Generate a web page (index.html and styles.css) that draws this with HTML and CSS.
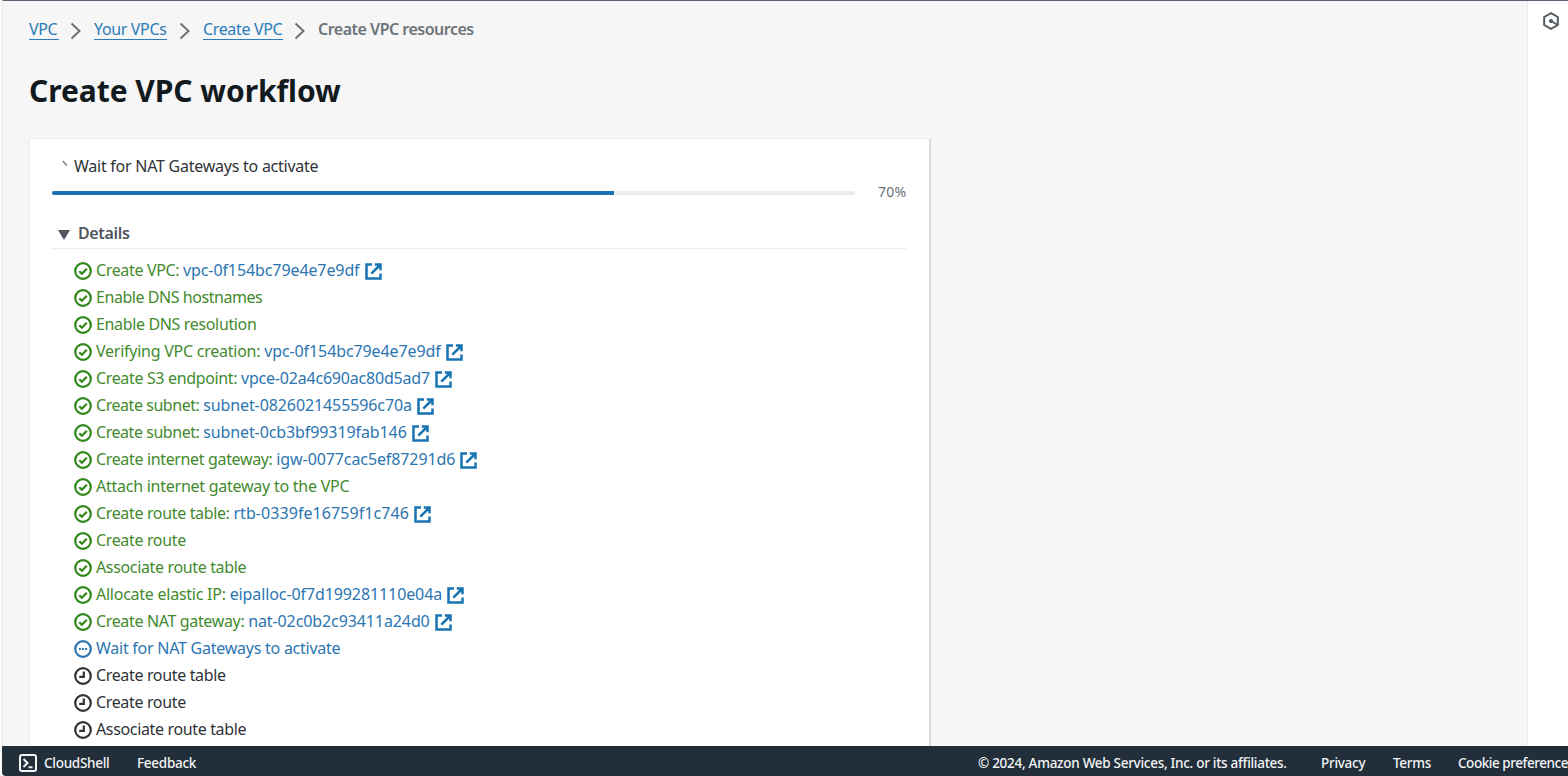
FILE: index.html
```html
<!DOCTYPE html>
<html lang="en">
<head>
<meta charset="utf-8">
<title>Create VPC workflow</title>
<link rel="stylesheet" href="styles.css">
</head>
<body>
<svg class="defs" aria-hidden="true">
  <symbol id="ok" viewBox="0 0 18 18"><circle cx="9" cy="9" r="7.8"/><path d="M5.3 9.2l2.6 2.5 4.9-5"/></symbol>
  <symbol id="run" viewBox="0 0 18 18"><circle cx="9" cy="9" r="7.8"/><path d="M4.9 9h2M8 9h2M11.1 9h2"/></symbol>
  <symbol id="wait" viewBox="0 0 18 18"><circle cx="9" cy="9" r="7.8"/><path d="M9.8 4.6v5.2H5.2"/></symbol>
  <symbol id="ext" viewBox="0 0 17 17"><path d="M7 1.6H1.5v13.9h14V10.5M9.8 1.5h5.7v5.7M15 2L6.3 10.7"/></symbol>
  <symbol id="chev" viewBox="0 0 12 18"><path d="M1.5 1.5L9.5 9l-8 7.5"/></symbol>
</svg>
<div class="app">
  <div class="body">
    <main class="main">
      <nav class="crumbs">
        <a class="c1">VPC</a><svg class="chev"><use href="#chev"/></svg>
        <a class="c2">Your VPCs</a><svg class="chev"><use href="#chev"/></svg>
        <a class="c3">Create VPC</a><svg class="chev"><use href="#chev"/></svg>
        <b>Create VPC resources</b>
      </nav>
      <h1>Create VPC workflow</h1>
      <section class="card">
        <div class="status"><svg class="spin" viewBox="0 0 6 7"><path d="M.8 1l4 4.5"/></svg><span>Wait for NAT Gateways to activate</span></div>
        <div class="progress"><div class="track"><div class="fill"></div></div><span class="pct">70%</span></div>
        <div class="details"><svg class="caret" viewBox="0 0 12 10"><path d="M0 0h12L6 10z"/></svg><span>Details</span></div>
        <ul class="steps">
          <li class="ok"><svg><use href="#ok"/></svg><span>Create VPC: <a>vpc-0f154bc79e4e7e9df</a></span><svg class="ext"><use href="#ext"/></svg></li>
          <li class="ok tight"><svg><use href="#ok"/></svg><span>Enable DNS hostnames</span></li>
          <li class="ok"><svg><use href="#ok"/></svg><span>Enable DNS resolution</span></li>
          <li class="ok loose"><svg><use href="#ok"/></svg><span>Verifying VPC creation: <a>vpc-0f154bc79e4e7e9df</a></span><svg class="ext"><use href="#ext"/></svg></li>
          <li class="ok endpoint"><svg><use href="#ok"/></svg><span>Create S3 endpoint: <a>vpce-02a4c690ac80d5ad7</a></span><svg class="ext"><use href="#ext"/></svg></li>
          <li class="ok tight"><svg><use href="#ok"/></svg><span>Create subnet: <a>subnet-0826021455596c70a</a></span><svg class="ext"><use href="#ext"/></svg></li>
          <li class="ok tight"><svg><use href="#ok"/></svg><span>Create subnet: <a>subnet-0cb3bf99319fab146</a></span><svg class="ext"><use href="#ext"/></svg></li>
          <li class="ok"><svg><use href="#ok"/></svg><span>Create internet gateway: <a>igw-0077cac5ef87291d6</a></span><svg class="ext"><use href="#ext"/></svg></li>
          <li class="ok loose"><svg><use href="#ok"/></svg><span>Attach internet gateway to the VPC</span></li>
          <li class="ok table"><svg><use href="#ok"/></svg><span>Create route table: <a>rtb-0339fe16759f1c746</a></span><svg class="ext"><use href="#ext"/></svg></li>
          <li class="ok"><svg><use href="#ok"/></svg><span>Create route</span></li>
          <li class="ok"><svg><use href="#ok"/></svg><span>Associate route table</span></li>
          <li class="ok loose"><svg><use href="#ok"/></svg><span>Allocate elastic IP: <a>eipalloc-0f7d199281110e04a</a></span><svg class="ext"><use href="#ext"/></svg></li>
          <li class="ok"><svg><use href="#ok"/></svg><span>Create NAT gateway: <a>nat-02c0b2c93411a24d0</a></span><svg class="ext"><use href="#ext"/></svg></li>
          <li class="run loose"><svg><use href="#run"/></svg><span>Wait for NAT Gateways to activate</span></li>
          <li><svg><use href="#wait"/></svg><span>Create route table</span></li>
          <li><svg><use href="#wait"/></svg><span>Create route</span></li>
          <li><svg><use href="#wait"/></svg><span>Associate route table</span></li>
        </ul>
      </section>
    </main>
    <aside class="rail"><svg viewBox="0 0 18 18"><path d="M9 1.2l6.8 3.8v8L9 16.8 2.2 13V5z"/><path d="M9 9l6 3.5"/><circle cx="9" cy="9" r="1.6"/></svg></aside>
  </div>
  <footer class="footer">
    <svg viewBox="0 0 18 18"><rect x="1" y="1" width="16" height="16" rx="2"/><path d="M4.5 5l4 4-4 4M9.5 13.2h4"/></svg>
    <span class="shell">CloudShell</span><span class="feedback">Feedback</span>
    <span class="copy">© 2024, Amazon Web Services, Inc. or its affiliates.</span>
    <span class="privacy">Privacy</span><span class="terms">Terms</span><span class="cookies">Cookie preference</span>
  </footer>
</div>
</body>
</html>
```
FILE: styles.css
```css
* { box-sizing: border-box; }
body { margin: 0; background: #fff; overflow: hidden; font: 16px/27px "Noto Sans", "Open Sans", sans-serif; letter-spacing: -0.35px; color: #2f3338; }
svg { fill: none; stroke: currentColor; flex: none; }
.defs { display: none; }
.app { height: 776px; padding-left: 2px; display: flex; flex-direction: column; overflow: hidden; background: #fafafa; }
.body { height: 746px; display: flex; border-top: 1px solid #5b6275; border-left: 1px solid #e4e5e6; background: #f6f6f6; overflow: hidden; }
.main { flex: 1; padding: 15px 0 0 26px; }
.crumbs { display: flex; height: 27px; align-items: flex-start; white-space: nowrap; color: #6d7478; }
.crumbs a { color: #2b7cb8; height: 24px; border-bottom: 1px solid #2b7cb8; }
.c1 { width: 30px; }
.c2 { width: 73px; }
.c3 { width: 80px; }
.crumbs b { font-weight: 600; letter-spacing: -0.5px; }
.chev { width: 12px; height: 18px; margin: 6px 12px 0 11px; stroke-width: 2; color: #6d7478; }
.crumbs .c2 + .chev { margin-left: 12px; }
h1 { margin: 26px 0 0; font-size: 30px; line-height: 44px; font-weight: 700; letter-spacing: -0.05px; color: #121a1e; white-space: nowrap; }
.card { width: 902px; height: 640px; margin-top: 25px; padding: 14px 22px 0; background: #fff; border: 1px solid #eeeff0; border-right: 2px solid #dcdddd; }
.status { display: flex; padding-left: 10px; gap: 6px; height: 27px; letter-spacing: -0.25px; }
.spin { width: 6px; height: 7px; margin-top: 7px; color: #7b8085; stroke-width: 1.5; }
.progress { display: flex; height: 22px; align-items: center; }
.track { width: 803px; height: 4px; margin-top: 4px; background: #ececec; border-radius: 2px; }
.fill { width: 70%; height: 4px; background: #1873b1; border-radius: 2px 0 0 2px; }
.pct { margin-left: 23px; font-size: 14px; letter-spacing: 0.2px; color: #687078; }
.details { display: flex; align-items: center; width: 855px; height: 47px; padding: 16px 0 0 6px; gap: 8px; font-weight: 600; color: #50575e; border-bottom: 1px solid #eeeeef; }
.caret { width: 12px; height: 10px; fill: #50575e; stroke: none; margin-top: 3px; }
.steps { list-style: none; margin: 8px 0 0; padding: 0 0 0 22px; }
.steps li { display: flex; height: 27px; align-items: center; white-space: nowrap; }
.steps svg { width: 18px; height: 18px; margin: 1px 4px 0 0; stroke-width: 2.2; }
.steps .ext { width: 17px; height: 17px; margin: 2px 0 0 5px; stroke-width: 2.5; color: #1873b1; }
.steps span { margin-top: -1px; }
.steps .tight { letter-spacing: -0.45px; }
.steps .loose { letter-spacing: -0.25px; }
.steps a { letter-spacing: -0.1px; }
.steps .endpoint a { letter-spacing: -0.2px; }
.steps .table a { letter-spacing: 0.07px; }
.ok { color: #438a2e; }
.ok > svg { color: #2f8718; }
.steps a, .run { color: #2b75b1; }
.rail { width: 41px; background: #fff; border-left: 1px solid #e6e8ea; padding: 11px 0 0 14px; color: #535a60; }
.rail svg { width: 18px; height: 18px; display: block; stroke-width: 2; }
.rail circle { fill: currentColor; stroke-width: 1; }
.footer { height: 30px; display: flex; align-items: center; padding: 3px 0 0 17px; background: #222e3a; color: #f2f4f5; border-bottom-left-radius: 4px; font: 500 13.5px/20px "Noto Sans", sans-serif; letter-spacing: -0.28px; white-space: nowrap; }
.footer svg { width: 18px; height: 18px; stroke-width: 2; margin: 1px 7px 0 0; }
.footer span { flex: none; }
.shell { width: 93px; }
.feedback { width: 841px; }
.copy { width: 343px; }
.privacy { width: 72px; }
.terms { width: 65px; }
.cookies { letter-spacing: -0.45px; }
```
